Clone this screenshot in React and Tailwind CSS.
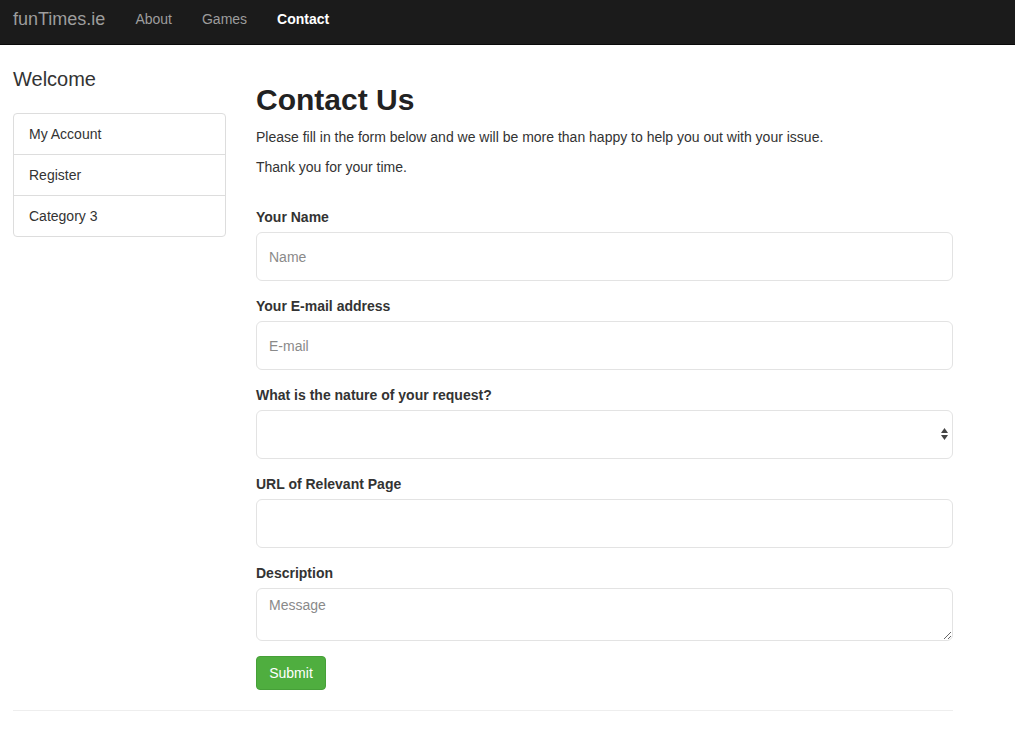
import React from "react";

const font = { fontFamily: '"Liberation Sans", Arial, sans-serif' };

function Field({ label, children }) {
  return (
    <div className="mb-[15px]">
      <label className="block text-[14px] leading-[20px] font-bold text-[#333] mb-[5px]">{label}</label>
      {children}
    </div>
  );
}

const inputCls =
  "block w-full h-[49px] rounded-[6px] border border-[#e3e3e3] bg-white px-[12px] text-[14px] text-[#555] placeholder:text-[#8a8a8a] outline-none";

export default function App() {
  return (
    <div style={font} className="min-h-[732px] bg-white text-[#333] text-[14px] leading-[20px]">
      <nav className="h-[45px] bg-[#1b1b1b] border-b border-[#0a0a0a] flex items-start pt-[8px] pl-[13px]">
        <span className="text-[18px] leading-[22px] text-[#9d9d9d] mr-[30px]">funTimes.ie</span>
        <span className="text-[14px] leading-[22px] text-[#9d9d9d] mr-[30px]">About</span>
        <span className="text-[14px] leading-[22px] text-[#9d9d9d] mr-[30px]">Games</span>
        <span className="text-[14px] leading-[22px] text-white font-bold">Contact</span>
      </nav>
      <div className="pl-[13px] w-[953px]">
        <div className="flex gap-[30px]">
          <aside className="w-[213px] shrink-0">
            <h3 className="text-[20px] leading-[26px] font-normal mt-[21px] mb-[21px] text-[#333]">Welcome</h3>
            <div className="rounded-[4px] border border-[#ddd]">
              <div className="h-[41px] flex items-center px-[15px] border-b border-[#ddd]">My Account</div>
              <div className="h-[41px] flex items-center px-[15px] border-b border-[#ddd]">Register</div>
              <div className="h-[40px] flex items-center px-[15px]">Category 3</div>
            </div>
          </aside>
          <main className="w-[697px]">
            <h1 className="text-[30px] leading-[40px] font-bold mt-[35px] mb-[7px] text-[#222]">Contact Us</h1>
            <p className="mb-[10px]">Please fill in the form below and we will be more than happy to help you out with your issue.</p>
            <p className="mb-[10px]">Thank you for your time.</p>
            <form className="mt-[30px]">
              <Field label="Your Name">
                <input className={inputCls} placeholder="Name" />
              </Field>
              <Field label="Your E-mail address">
                <input className={inputCls} placeholder="E-mail" />
              </Field>
              <Field label="What is the nature of your request?">
                <div className="relative h-[49px] rounded-[6px] border border-[#e3e3e3] bg-white">
                  <svg className="absolute right-[3px] top-[16px]" width="9" height="14" viewBox="0 0 9 14">
                    <path d="M4.5 1 L8 6 H1 Z" fill="#444" />
                    <path d="M4.5 13 L8 8 H1 Z" fill="#444" />
                  </svg>
                </div>
              </Field>
              <Field label="URL of Relevant Page">
                <input className={inputCls} />
              </Field>
              <Field label="Description">
                <textarea
                  className="block w-full h-[53px] rounded-[6px] border border-[#e3e3e3] bg-white px-[12px] py-[6px] text-[14px] text-[#555] placeholder:text-[#8a8a8a] outline-none resize-y"
                  placeholder="Message"
                />
              </Field>
              <button
                type="button"
                className="h-[34px] w-[70px] rounded-[4px] bg-[#4fae3f] border border-[#46a038] text-white text-[14px] font-normal"
              >
                Submit
              </button>
            </form>
          </main>
        </div>
        <hr className="mt-[20px] border-t border-[#eee]" />
      </div>
    </div>
  );
}
